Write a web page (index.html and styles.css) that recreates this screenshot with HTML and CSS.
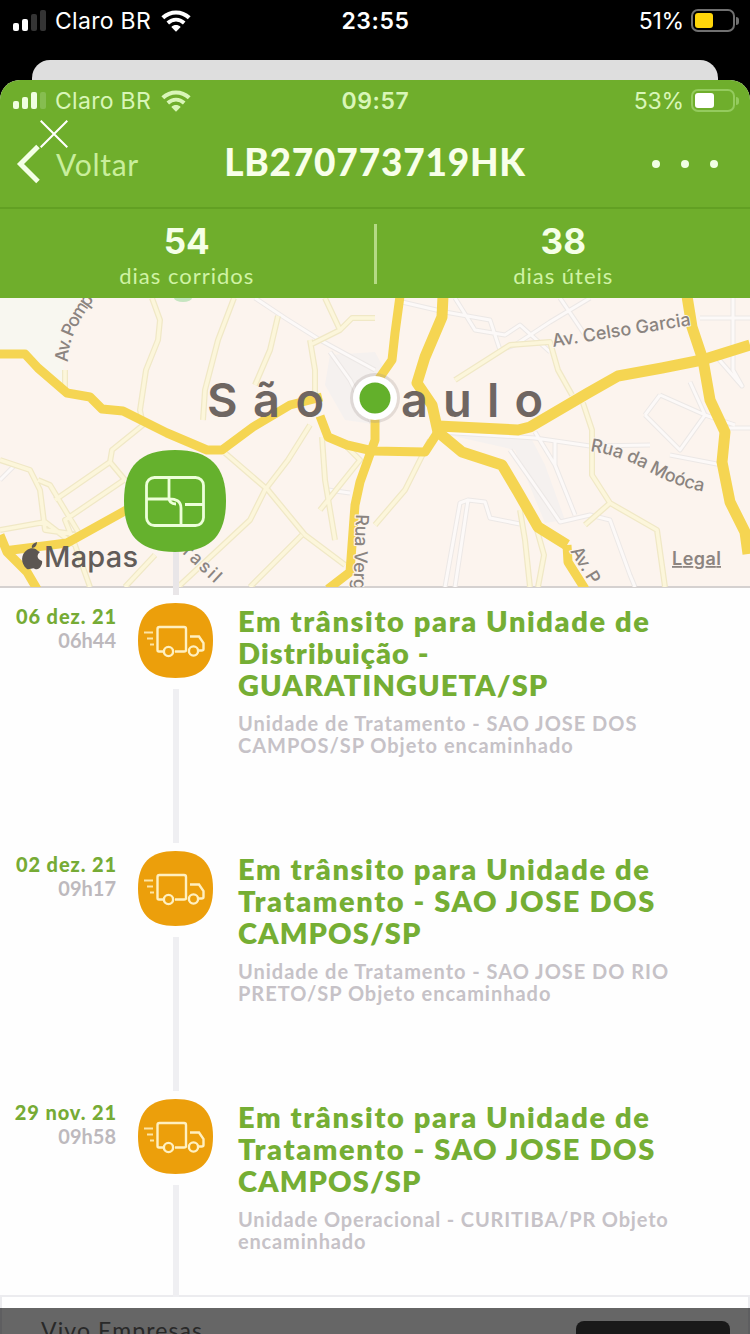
FILE: index.html
```html
<!DOCTYPE html>
<html lang="pt-BR">
<head>
  <meta charset="UTF-8">
  <title>LB270773719HK</title>
  <link rel="stylesheet" href="styles.css">
</head>
<body>

  <svg width="0" height="0" class="defs">
    <symbol id="wifi" viewBox="0 0 30 22">
      <path d="M1.800 7.800C9.500.7 20.500.7 28.200 7.800" fill="none" stroke="currentColor" stroke-width="4.200"/>
      <path d="M6.800 13C11.700 8.600 18.300 8.600 23.200 13" fill="none" stroke="currentColor" stroke-width="3.800"/>
      <path d="M10.300 17C13 14.400 17 14.400 19.700 17L15 21.800Z" fill="currentColor"/>
    </symbol>
    <symbol id="truck" viewBox="0 0 75 75">
      <path d="M37.500 0C63 0 75 12 75 37.500S63 75 37.500 75 0 63 0 37.500 12 0 37.500 0Z" fill="#ec9f0b"/>
      <g fill="none" stroke="#fff0c0" stroke-width="2.400">
        <path d="M25 48.500H21Q19.500 48.500 19.500 47V26Q19.500 24 21.500 24H46Q48 24 48 26V47Q48 48.500 46 48.500H37"/>
        <path d="M52 33.500H61L65.500 40V46Q65.500 47.500 63.500 47.500H61"/>
        <circle cx="30.500" cy="48.500" r="4.600"/>
        <circle cx="55.500" cy="48" r="4.600"/>
        <path d="M6 29.500H15M9 35.500H15M12 41.500H16" stroke-width="2" opacity=".85"/>
      </g>
    </symbol>
  </svg>

  <div class="status-bar">
    <div class="carrier">
      <div class="signal"><i></i><i></i><i class="off"></i><i class="off"></i></div>
      <span class="carrier-name">Claro BR</span>
      <svg class="wifi"><use href="#wifi"/></svg>
    </div>
    <div class="clock">23:55</div>
    <div class="power">
      <span>51%</span>
      <div class="battery"><i></i></div>
    </div>
  </div>

  <div class="back-card"></div>

  <div class="sheet">
    <div class="header">
      <div class="status-bar inner">
        <div class="carrier">
          <div class="signal"><i></i><i></i><i></i><i class="off"></i></div>
          <span class="carrier-name">Claro BR</span>
          <svg class="wifi"><use href="#wifi"/></svg>
        </div>
        <div class="clock">09:57</div>
        <div class="power">
          <span>53%</span>
          <div class="battery"><i></i></div>
        </div>
      </div>

      <div class="nav">
        <div class="back">
          <svg width="26" height="40" viewBox="0 0 26 40"><path d="M22 2.500L4.500 20L22 37.500" fill="none" stroke="#f4ffe6" stroke-width="5"/></svg>
          <span>Voltar</span>
        </div>
        <h1>LB270773719HK</h1>
        <div class="more"><i></i><i></i><i></i></div>
      </div>
      <svg class="close" viewBox="0 0 28 28"><path d="M.7 .7L27.300 27.300M27.300 .7L.7 27.300" stroke="#fff" stroke-width="2"/></svg>

      <div class="stats">
        <div class="stat"><b>54</b><span>dias corridos</span></div>
        <div class="divider"></div>
        <div class="stat"><b>38</b><span>dias úteis</span></div>
      </div>
    </div>

    <div class="map">
      <svg class="map-canvas" viewBox="0 298 750 289">
        <defs>
          <path id="streets" d="M255 298L285 318L320 340L375 370M330 352L350 380L372 423M402 302L445 312L490 320L500 350L515 345L550 322L590 298M455 298L475 330L505 335L520 325L550 352M560 298L585 335M700 318H750M733 298V370L742 386L715 355M440 432L535 438L590 446L650 445M535 432L555 465L575 515M555 440V465M510 450L545 500L560 522L590 515L610 520L630 575L635 587M455 587L468 500L485 502L490 518L520 524M445 587L460 503L468 500M645 415L680 450L705 415L690 382M660 395L705 415L735 425M645 415L660 395M670 455L722 465M725 428H750M0 480L15 465M328 490L350 493"/>
          <path id="minors" d="M152 298L160 320L158 340L146 370L140 410L143 425L112 450L110 462L125 480M234 298L218 340L205 390L203 420M278 316L270 350L255 385M310 340L315 370V400M325 298L340 330L310 345M340 330L352 318H375M0 460L30 470L40 490L45 530L80 535L50 485L38 480M0 530L45 522L75 545L65 520L124 480M55 500L110 462M310 425L288 460L265 490L250 520L178 587M225 453L268 490L305 535L345 565M322 437L325 480L335 540M430 440L405 490L375 525M302 535L250 587M345 445L360 460L320 510M455 380L510 345L550 342L558 370L572 395M583 403L592 430L592 475L610 503L657 530L665 587M520 510L525 540L530 587M537 530L544 555L538 587M65 388V370M125 587L155 555M75 545L90 587M610 503L585 525"/>
        </defs>

        <path d="M0 298H86L62 350L66 393L25 355L0 354Z" fill="#f8f7f0"/>
        <ellipse cx="183" cy="298" rx="9" ry="4" fill="#c5e5c0"/>
        <path d="M330 355L375 352L390 380L380 425L345 420L325 385ZM440 433L530 436L545 465L565 520L545 523L515 450Z" fill="#f5f1ef"/>

        <use href="#streets" class="street-edge"/>
        <use href="#streets" class="street"/>
        <use href="#minors" class="minor-edge"/>
        <use href="#minors" class="minor"/>

        <!-- avenues -->
        <g class="avenue">
          <path d="M0 354H25L38 368L67 393L90 397L102 409L123 411L167 433L207 450H222L253 427L290 405L322 397"/>
          <path d="M320 416L328 437L347 445L373 451L425 452L438 432"/>
          <path d="M375 415V440L360 482L355 505L350 572L328 589"/>
          <path d="M400 296L395 333L392 360L378 380"/>
          <path d="M0 535L7 552L27 572L37 589M4 551L67 543L130 508"/>
          <path d="M567 545L568 562L585 589"/>
        </g>
        <g class="avenue wide">
          <path d="M443 296L442 317L425 357L417 383L432 405L438 432L462 452L502 465L518 492L538 527L567 545"/>
          <path d="M438 426L518 430L530 427L588 393L618 376L662 368L702 360L750 345"/>
          <path d="M687 296L692 327L703 360L710 400L725 432L722 462L730 502L745 532L748 554"/>
        </g>

        <g class="road-label">
          <path id="pompeia" d="M68 362Q67 334 98 294" fill="none"/>
          <text><textPath href="#pompeia" textLength="70">Av. Pomp</textPath></text>
          <text transform="translate(553 347) rotate(-9)" textLength="140">Av. Celso Garcia</text>
          <path id="mooca" d="M590 451Q622 456 650 472T708 492" fill="none"/>
          <text><textPath href="#mooca" textLength="121">Rua da Moóca</textPath></text>
          <text transform="translate(356 514) rotate(92)" textLength="76">Rua Verg</text>
          <text transform="translate(182 553) rotate(43)" textLength="45">rasil</text>
          <text transform="translate(570 551) rotate(59)" textLength="40">Av. P</text>
        </g>

        <text class="city" x="207" y="417" textLength="117">São</text>
        <text class="city" x="401" y="417" textLength="142">aulo</text>
        <circle cx="375" cy="398" r="25" fill="#9a8f8a" opacity=".25"/>
        <circle cx="375" cy="398" r="22" fill="#fff"/>
        <circle cx="375" cy="398" r="15.500" fill="#63b02b"/>

        <path d="M38 551C36 548 31 547 27 550C21 554 20 563 27 569C30 570 33 567 35 569C40 571 43 563 42 561C36 559 37 554 40 552ZM32 548C31 545 34 543 37 542C37 545 35 548 32 548Z" fill="#5c5652"/>
        <text class="maps-name" x="44" y="567" textLength="94">Mapas</text>
        <text class="legal" x="672" y="565" textLength="49">Legal</text>
      </svg>
      <div class="map-line"></div>
      <svg class="map-badge" viewBox="0 0 102 102">
        <path d="M51 0C86 0 102 16 102 51S86 102 51 102 0 86 0 51 16 0 51 0Z" fill="#65b12d"/>
        <g fill="none" stroke="#edffd9" stroke-width="2.800">
          <rect x="22.500" y="27.500" width="57" height="48" rx="8"/>
          <path d="M45 28V47Q45 54 52 54M23 49H43Q57 48 57 58V75M61 54.500H79"/>
        </g>
      </svg>
    </div>

    <div class="timeline">
      <div class="event">
        <div class="when"><b>06 dez. 21</b><span>06h44</span></div>
        <div class="rail"><svg class="truck"><use href="#truck"/></svg><i></i></div>
        <div class="info">
          <h2>
            Em trânsito para Unidade de<br>
            <span class="tight">Distribuição -</span><br>
            <span class="tight">GUARATINGUETA/SP</span>
          </h2>
          <p>Unidade de Tratamento - SAO JOSE DOS<br>CAMPOS/SP Objeto encaminhado</p>
        </div>
      </div>
      <div class="event">
        <div class="when"><b>02 dez. 21</b><span>09h17</span></div>
        <div class="rail"><svg class="truck"><use href="#truck"/></svg><i></i></div>
        <div class="info">
          <h2>
            Em trânsito para Unidade de<br>
            Tratamento - SAO JOSE DOS<br>
            <span class="tight">CAMPOS/SP</span>
          </h2>
          <p>Unidade de Tratamento - SAO JOSE DO RIO<br>PRETO/SP Objeto encaminhado</p>
        </div>
      </div>
      <div class="event last">
        <div class="when"><b>29 nov. 21</b><span>09h58</span></div>
        <div class="rail"><svg class="truck"><use href="#truck"/></svg><i></i></div>
        <div class="info">
          <h2>
            Em trânsito para Unidade de<br>
            Tratamento - SAO JOSE DOS<br>
            <span class="tight">CAMPOS/SP</span>
          </h2>
          <p>Unidade Operacional - CURITIBA/PR Objeto<br>encaminhado</p>
        </div>
      </div>
    </div>

    <div class="ad">
      <span>Vivo Empresas</span>
      <div class="ad-button"></div>
    </div>
  </div>

  <div class="dim"></div>

</body>
</html>
```
FILE: styles.css
```css
* {
  box-sizing: border-box;
}

body {
  margin: 0;
  width: 750px;
  height: 1334px;
  overflow: hidden;
  position: relative;
  background: #000;
  font-family: Lato, "Liberation Sans", sans-serif;
}

.defs {
  position: absolute;
}

/* status bars */
.status-bar {
  height: 60px;
  padding: 0 12px 0 13px;
  display: grid;
  grid-template-columns: 1fr auto 1fr;
  align-items: start;
  color: #fff;
  font-family: Inter, sans-serif;
  font-size: 23px;
  line-height: 42px;
}

.carrier,
.power {
  display: flex;
  align-items: center;
  height: 41px;
}

.power {
  justify-content: flex-end;
  gap: 7px;
  letter-spacing: -0.2px;
}

.signal {
  display: flex;
  align-items: flex-end;
  gap: 3px;
  height: 21px;
  width: 33px;
}

.signal i {
  width: 6px;
  height: 8px;
  border-radius: 2px;
  background: #fff;
}

.signal i:nth-child(2) { height: 12px; }
.signal i:nth-child(3) { height: 17px; }
.signal i:nth-child(4) { height: 21px; }
.signal .off { background: #343434; }

.carrier-name {
  width: 97px;
  margin-left: 9px;
  white-space: nowrap;
  letter-spacing: 0.3px;
}

.wifi {
  width: 30px;
  height: 22px;
  margin-left: 9px;
}

.clock {
  font-weight: 600;
  letter-spacing: 0.6px;
}

.battery {
  position: relative;
  width: 44px;
  height: 23px;
  padding: 2px;
  border: 2px solid #707070;
  border-radius: 7px;
  margin-right: 3px;
}

.battery i {
  display: block;
  width: 18px;
  height: 15px;
  border-radius: 3px;
  background: #ffd60a;
}

.battery::after {
  content: "";
  position: absolute;
  right: -6px;
  top: 6px;
  width: 3px;
  height: 8px;
  border-radius: 0 3px 3px 0;
  background: #707070;
}

.inner {
  height: 42px;
  color: #d9f6b8;
}

.inner .signal i { background: #f0ffe0; }
.inner .signal .off { background: #86bd50; }
.inner .signal { height: 17px; }
.inner .signal i:nth-child(3),
.inner .signal i:nth-child(4) { height: 17px; }
.inner .battery { border-color: #94cb5e; }
.inner .battery::after { background: #94cb5e; }
.inner .battery i { background: #fff; width: 19px; }

/* sheets */
.back-card {
  height: 20px;
  margin: 0 32px;
  border-radius: 18px 18px 0 0;
  background: #dedede;
}

.sheet {
  height: 1254px;
  border-radius: 20px 20px 0 0;
  overflow: hidden;
  background: #fefefe;
}

.header {
  position: relative;
  height: 218px;
  background: #6fae2c;
}

.nav {
  height: 87px;
  display: grid;
  grid-template-columns: 1fr auto 1fr;
  align-items: center;
  padding: 0 32px 5px 16px;
  border-bottom: 2px solid #62a023;
}

.back {
  display: flex;
  align-items: center;
  gap: 14px;
  font-size: 30px;
  letter-spacing: 0.7px;
  color: #c9ee9c;
  padding-top: 4px;
}

.nav h1 {
  margin: 0 -8px 0 8px;
  font-size: 37px;
  line-height: 40px;
  font-weight: 900;
  letter-spacing: 0.8px;
  color: #f8ffe9;
}

.more {
  display: flex;
  justify-content: flex-end;
  gap: 21px;
  padding-top: 3px;
}

.more i {
  width: 8px;
  height: 8px;
  border-radius: 50%;
  background: #f2ffe4;
}

.close {
  position: absolute;
  left: 40px;
  top: 40px;
  width: 28px;
  height: 28px;
}

.stats {
  height: 89px;
  display: flex;
  align-items: center;
}

.stat {
  flex: 1;
  display: flex;
  flex-direction: column;
  align-items: center;
  color: #d0f3a5;
  font-size: 22px;
  line-height: 30px;
  letter-spacing: 1px;
  padding-top: 6px;
}

.stat b {
  font-family: Inter, sans-serif;
  color: #f5ffe7;
  font-size: 35px;
  line-height: 39px;
  letter-spacing: 0;
}

.divider {
  width: 3px;
  height: 60px;
  background: #b5da85;
}

/* map */
.map {
  position: relative;
  height: 290px;
  border-bottom: 2px solid #d5d1d0;
  background: #fcf4ee;
}

.map-canvas {
  display: block;
  width: 750px;
  height: 289px;
  stroke-linejoin: round;
}

.street-edge { fill: none; stroke: #ece8e6; stroke-width: 5; }
.street { fill: none; stroke: #fcf9f8; stroke-width: 3; }
.minor-edge { fill: none; stroke: #f0e8c6; stroke-width: 6; }
.minor { fill: none; stroke: #fcf6db; stroke-width: 3.5; }
.avenue { fill: none; stroke: #f5d552; stroke-width: 9; }
.wide { stroke-width: 11; }

.road-label {
  font-family: Inter, sans-serif;
  font-size: 18px;
  font-weight: 500;
}

.road-label text {
  fill: #8b8480;
  stroke: #fbf5ef;
  stroke-width: 2px;
  paint-order: stroke;
}

.city {
  font-family: Inter, sans-serif;
  font-size: 47px;
  font-weight: 600;
  fill: #6f6662;
}

.maps-name {
  font-family: Inter, sans-serif;
  font-size: 29px;
  font-weight: 500;
  fill: #625c59;
}

.legal {
  font-family: Inter, sans-serif;
  font-size: 18px;
  font-weight: 600;
  fill: #8c8480;
  text-decoration: underline;
}

.map-badge {
  position: absolute;
  left: 124px;
  top: 152px;
  width: 102px;
  height: 102px;
}

.map-line {
  position: absolute;
  left: 173px;
  top: 250px;
  width: 6px;
  height: 47px;
  background: #e9e6e8;
}

/* timeline */
.timeline {
  height: 707px;
  padding-top: 15px;
}

.event {
  display: flex;
  height: 248px;
}

.when {
  width: 117px;
  display: flex;
  flex-direction: column;
  align-items: flex-end;
  font-size: 20px;
  line-height: 24px;
  padding-top: 1px;
  white-space: nowrap;
  color: #bdb9bd;
  font-weight: 700;
}

.when b {
  color: #76ab35;
  letter-spacing: 0.9px;
}

.when span {
  margin-right: 1px;
}

.rail {
  width: 75px;
  margin-left: 21px;
  display: flex;
  flex-direction: column;
  align-items: center;
}

.truck {
  width: 75px;
  height: 75px;
}

.rail i {
  width: 6px;
  height: 154px;
  margin-top: 11px;
  background: #efeff2;
}

.last .rail i {
  height: 112px;
}

.info {
  margin-left: 25px;
  white-space: nowrap;
}

.info h2 {
  margin: 2px 0 0;
  font-size: 29px;
  line-height: 32px;
  font-weight: 800;
  letter-spacing: 1.6px;
  color: #75ae34;
}

.tight {
  letter-spacing: 1.05px;
}

.info p {
  margin: 11px 0 0;
  font-size: 20px;
  line-height: 22px;
  font-weight: 700;
  letter-spacing: 0.98px;
  color: #c6c2c7;
}

.last p {
  letter-spacing: 0.83px;
}

.ad {
  height: 40px;
  border: 2px solid #ececef;
  border-bottom: 0;
  background: #fff;
  display: flex;
  justify-content: space-between;
  padding: 19px 18px 0 39px;
  font-size: 23px;
  line-height: 28px;
  letter-spacing: 1.1px;
  color: #666;
}

.ad-button {
  width: 154px;
  height: 30px;
  margin-top: 5px;
  border-radius: 8px;
  background: #404040;
}

.dim {
  position: absolute;
  left: 0;
  bottom: 0;
  width: 750px;
  height: 26px;
  background: rgba(0, 0, 0, 0.6);
}
```
